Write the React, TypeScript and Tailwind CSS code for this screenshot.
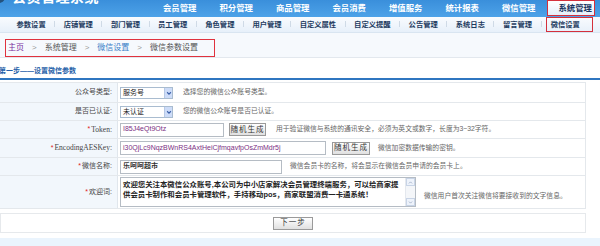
import type { ReactNode } from "react";

const topNav = ["会员管理", "积分管理", "商品管理", "会员消费", "增值服务", "统计报表", "微信管理"];
const subNav = ["参数设置", "店铺管理", "部门管理", "员工管理", "角色管理", "用户管理", "自定义属性", "自定义提醒", "公告管理", "系统日志", "留言管理"];

function Select({ value }: { value: string }) {
  return (
    <div className="flex h-[12px] w-[53px] items-center border border-[#a9bcd0] bg-white">
      <span className="flex-1 pl-[2px] text-[7px] leading-none text-[#222]">{value}</span>
      <span className="flex h-full w-[8px] items-center justify-center border-l border-[#b7c9e6] bg-[#cddcf8]">
        <svg viewBox="0 0 8 8" className="h-[6px] w-[6px]">
          <path d="M1.5 3l2.5 2.5L6.5 3" fill="none" stroke="#3a5fa8" strokeWidth={1.5} />
        </svg>
      </span>
    </div>
  );
}

function Btn({ children, className = "" }: { children: ReactNode; className?: string }) {
  return (
    <div
      className={`flex h-[13px] items-center justify-center border border-[#9a9a9a] bg-gradient-to-b from-[#ffffff] to-[#e0e0e0] text-[7.5px] leading-none tracking-[1px] text-[#333] ${className}`}
    >
      {children}
    </div>
  );
}

function Row({
  label,
  required,
  h,
  children,
}: {
  label: ReactNode;
  required?: boolean;
  h: string;
  children: ReactNode;
}) {
  return (
    <div className={`flex border-b border-[#e4e8ec] ${h}`}>
      <div className="flex w-[118px] shrink-0 items-center justify-end border-r border-[#e0e6ec] bg-[#f2f7fc] pr-[5px] text-[7px] text-[#444]">
        {required && <span className="mr-[1px] text-[#e02020]">*</span>}
        {label}
      </div>
      <div className="flex flex-1 items-center pl-[2px]">{children}</div>
    </div>
  );
}

function Hint({ children, className = "" }: { children: ReactNode; className?: string }) {
  return <span className={`text-[6.8px] leading-none text-[#666] ${className}`}>{children}</span>;
}

export default function App() {
  return (
    <div className="h-[246px] w-[600px] overflow-hidden bg-white font-['Liberation_Sans','Noto_Sans_CJK_SC',sans-serif] text-[#333]">
      {/* Top bar */}
      <div className="flex h-[17px] overflow-hidden bg-gradient-to-b from-[#3a8fdb] to-[#4da2e8]">
        <div className="flex w-[151.5px] shrink-0 items-center gap-[7px] self-start -mt-[10px]">
          <span className="-ml-[7px] h-[12px] w-[12px] rounded-full bg-[#24527e]" />
          <span className="text-[14px] font-bold leading-[14px] tracking-[0.5px] text-white">会员管理系统</span>
        </div>
        {topNav.map((t) => (
          <div key={t} className="w-[56.5px] shrink-0 text-center text-[8.4px] font-bold leading-[17px] text-white">
            {t}
          </div>
        ))}
        <div className="flex h-[16px] w-[48px] shrink-0 items-center justify-end border border-[#d4303c] bg-gradient-to-b from-[#ffffff] to-[#e4effa] pr-[2px] text-[8.4px] font-bold text-[#1a3560]">
          系统管理
        </div>
      </div>

      {/* Sub nav */}
      <div className="flex h-[16px] items-center border-b border-[#d9e5f1] bg-gradient-to-b from-[#f9fbfe] to-[#e7f0fa] pl-[8px]">
        {subNav.map((t) => (
          <div key={t} className="flex items-center">
            <span className="px-[8.5px] text-[7.3px] font-bold leading-none text-[#1d3b60]">{t}</span>
            <span className="h-[6px] w-px bg-[#cfdae6]" />
          </div>
        ))}
        <div className="ml-[4px] flex h-[15px] items-center self-end border border-[#d4303c] pl-[4px] pr-[12px] text-[7.3px] font-bold leading-none text-[#1d3b60]">
          微信设置
        </div>
      </div>

      {/* Breadcrumb */}
      <div className="h-[25px] border-b border-[#e3e8ee] bg-[#f6f9fd] pl-[5px] pt-[6px]">
        <div className="flex h-[18px] w-[210px] items-center border border-[#e0323e] pl-[2px] text-[8px] leading-none">
          <span className="text-[#7a2f9e]">主页</span>
          <span className="mx-[8px] text-[#999]">&gt;</span>
          <span className="text-[#555]">系统管理</span>
          <span className="mx-[8px] text-[#999]">&gt;</span>
          <span className="text-[#3a80c8]">微信设置</span>
          <span className="mx-[8px] text-[#999]">&gt;</span>
          <span className="text-[#555]">微信参数设置</span>
        </div>
      </div>

      {/* Step title */}
      <div className="h-[20px] pt-[9px]">
        <div className="-ml-[1px] text-[7px] font-bold leading-[8px] text-[#1f5fa8]">第一步——设置微信参数</div>
      </div>
      <div className="h-[2px] bg-[#2f76c0]" />

      {/* Form */}
      <div className="mt-[2px] w-[586px] border-r border-t border-[#e4e8ec]">
        <Row label="公众号类型:" h="h-[20px]">
          <Select value="服务号" />
          <Hint className="ml-[10px]">选择您的微信公众账号类型。</Hint>
        </Row>
        <Row label="是否已认证:" h="h-[18px]">
          <Select value="未认证" />
          <Hint className="ml-[10px]">您的微信公众账号是否已认证。</Hint>
        </Row>
        <Row label={<span className="font-['Liberation_Serif',serif] text-[7.5px]">Token:</span>} required h="h-[18px]">
          <div className="flex h-[14px] w-[104px] items-center border border-[#b5bcc4] pl-[2px] text-[7px] text-[#7b2f84]">
            I85J4eQt9Otz
          </div>
          <Btn className="ml-[5px] w-[37px]">随机生成</Btn>
          <Hint className="ml-[10px]">用于验证微信与系统的通讯安全，必须为英文或数字，长度为3~32字符。</Hint>
        </Row>
        <Row label={<span className="font-['Liberation_Serif',serif] text-[7.5px]">EncodingAESKey:</span>} required h="h-[19px]">
          <div className="flex h-[14px] w-[206px] items-center border border-[#b5bcc4] pl-[2px] text-[7px] text-[#7b2f84]">
            i30QjLc9NqzBWnRS4AxtHeiCjfmqavfpOsZmMdr5j
          </div>
          <Btn className="ml-[6px] w-[38px]">随机生成</Btn>
          <Hint className="ml-[8px]">微信加密数据传输的密钥。</Hint>
        </Row>
        <Row label="微信名称:" required h="h-[18px]">
          <div className="flex h-[14px] w-[162px] items-center border border-[#b5bcc4] pl-[2px] text-[7px] font-bold text-[#333]">
            乐呵呵超市
          </div>
          <Hint className="ml-[8px]">微信会员卡的名称，将会显示在微信会员申请的会员卡上。</Hint>
        </Row>
        <Row label="欢迎词:" required h="h-[33px]">
          <div className="flex h-[30px] w-[296px] border border-[#b5bcc4]">
            <div className="flex-1 pl-[2px] pt-[2px] text-[7.4px] font-bold leading-[10px] text-[#222]">
              <div className="whitespace-nowrap">欢迎您关注本微信公众账号,本公司为中小店家解决会员管理终端服务，可以给商家提</div>
              <div className="whitespace-nowrap">供会员卡制作和会员卡管理软件，手持移动pos，商家联盟消费一卡通系统！</div>
            </div>
            <div className="flex w-[10px] flex-col justify-between border-l border-[#e4e8ee] bg-[#f4f6f9]">
              <div className="flex h-[8px] items-center justify-center border border-[#c8d4e6] bg-[#eef3fb]">
                <svg viewBox="0 0 8 8" className="h-[5px] w-[5px]">
                  <path d="M1.5 5.5L4 3l2.5 2.5" fill="none" stroke="#9aaac4" strokeWidth={1.3} />
                </svg>
              </div>
              <div className="flex h-[8px] items-center justify-center border border-[#c8d4e6] bg-[#eef3fb]">
                <svg viewBox="0 0 8 8" className="h-[5px] w-[5px]">
                  <path d="M1.5 2.5L4 5l2.5-2.5" fill="none" stroke="#9aaac4" strokeWidth={1.3} />
                </svg>
              </div>
            </div>
          </div>
          <Hint className="ml-[8px] mt-[9px]">微信用户首次关注微信将要接收到的文字信息。</Hint>
        </Row>
      </div>

      {/* Next step */}
      <div className="mt-[4px] flex h-[20px] w-[586px] items-center justify-center border border-[#e6e9ec]">
        <Btn className="h-[13px] w-[40px]">下一步</Btn>
      </div>

      <div className="mt-[5px] h-[12px] bg-[#eaf4fd]" />
    </div>
  );
}
